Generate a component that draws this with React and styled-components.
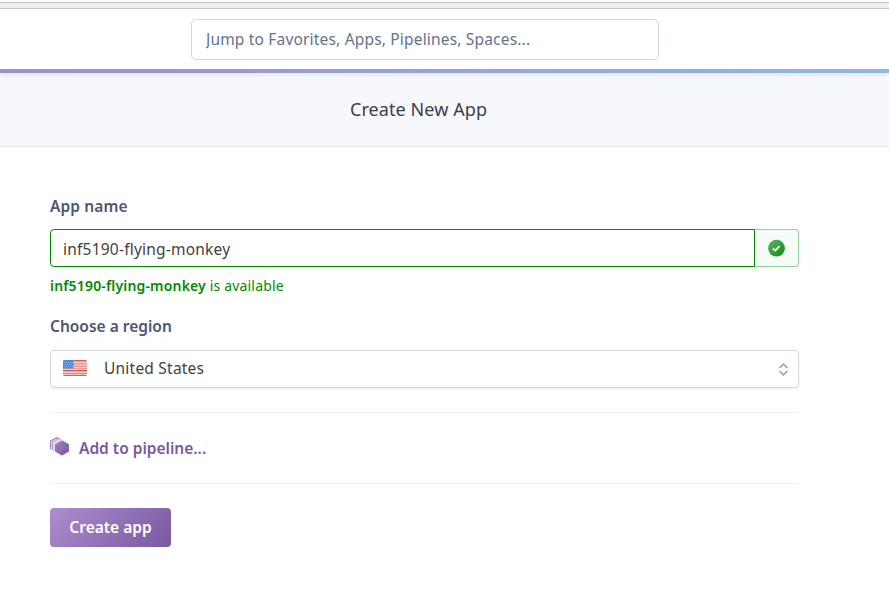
import React from 'react';
import styled, { createGlobalStyle } from 'styled-components';

const Global = createGlobalStyle`
  * { box-sizing: border-box; }
  body {
    margin: 0;
    background: #fff;
    color: #3f3f44;
    font-family: "Noto Sans", "Open Sans", sans-serif;
    font-size: 16px;
    overflow: hidden;
  }
`;

const Page = styled.div`
  display: flex;
  flex-direction: column;
  height: 609px;
`;

const BrowserEdge = styled.div`
  height: 7px;
  margin-top: 2px;
  background: #f0efee;
  border-top: 1px solid #c5c3c0;
  border-bottom: 1px solid #c5c3c0;
`;

const Header = styled.header`
  height: 60px;
  display: flex;
  padding: 10px 0 0 191px;
`;

const Search = styled.input`
  width: 468px;
  height: 41px;
  padding: 0 14px 1px;
  border: 1px solid #cfd7e6;
  border-radius: 5px;
  outline: none;
  background: #fff;
  font: 400 15.5px "Noto Sans", sans-serif;
  letter-spacing: 0.18px;
  &::placeholder { color: #62738d; opacity: 1; }
`;

const GradientBar = styled.div`
  height: 4px;
  background: linear-gradient(to right, #9e8fcb, #8fb8e0);
  box-shadow: 0 2px 4px rgba(0, 0, 0, 0.09);
  position: relative;
`;

const TitleBar = styled.div`
  height: 74px;
  padding: 0 0 2px 350px;
  display: flex;
  align-items: center;
  background: #f7f8fc;
  border-bottom: 1px solid #e3e8f3;
`;

const Title = styled.h1`
  margin: 0;
  font-size: 18px;
  font-weight: 400;
  line-height: 26px;
  letter-spacing: 0.08px;
  color: #3b3e4c;
`;

const Form = styled.form`
  width: 749px;
  margin-left: 50px;
  padding-top: 47px;
  display: flex;
  flex-direction: column;
`;

const Label = styled.label`
  height: 24px;
  line-height: 24px;
  margin-bottom: ${(p) => p.$gap}px;
  font-size: 15.5px;
  font-weight: 600;
  color: #4c586f;
  letter-spacing: ${(p) => p.$tracking || 0}px;
`;

const NameRow = styled.div`
  display: flex;
  height: 38px;
`;

const NameInput = styled.input`
  width: 705px;
  padding: 1px 12px 0;
  border: 1px solid #008a00;
  border-radius: 4px 0 0 4px;
  outline: none;
  color: #3f3f44;
  font: 400 15.5px "Noto Sans", sans-serif;
  letter-spacing: 0.22px;
  font-variant-ligatures: none;
`;

const Status = styled.div`
  flex: 1;
  display: flex;
  align-items: center;
  justify-content: center;
  border: 1px solid #8fd19b;
  border-left: 0;
  border-radius: 0 4px 4px 0;
  background: #f7fcf9;
`;

const Hint = styled.p`
  margin: 9px 0 18px;
  height: 20px;
  line-height: 20px;
  font-size: 14px;
  letter-spacing: 0.17px;
  color: #008a00;
  white-space: nowrap;
`;

const Strong = styled.strong`
  font-weight: 600;
`;

const Select = styled.div`
  height: 38px;
  padding: 0 9px 0 12px;
  display: flex;
  align-items: center;
  border: 1px solid #cfd7e6;
  border-radius: 4px;
  box-shadow: 0 2px 2px rgba(60, 80, 130, 0.05);
`;

const Region = styled.span`
  flex: 1;
  margin: -2px 0 0 17px;
  font-size: 15.5px;
  line-height: 24px;
  letter-spacing: 0.22px;
`;

const Rule = styled.hr`
  width: 100%;
  height: 1px;
  margin: ${(p) => p.$top}px 0 0;
  border: 0;
  background: #edeff4;
`;

const Pipeline = styled.a`
  height: 24px;
  margin-top: 23px;
  display: flex;
  align-items: center;
  gap: 9px;
  color: #79589f;
  font-size: 15.5px;
  font-weight: 600;
`;

const CreateButton = styled.button`
  width: 121px;
  height: 39px;
  margin-top: 24px;
  padding: 0 0 1px;
  border: 0;
  border-radius: 4px;
  color: #fff;
  background: linear-gradient(135deg, #ad8ecf, #79589f);
  font: 600 15.5px "Noto Sans", sans-serif;
`;

const PipelineSvg = styled.svg`
  margin-top: -4px;
`;

const FlagSvg = styled.svg`
  margin-top: -3px;
`;

const CheckIcon = () => (
  <svg width="18" height="18" viewBox="0 0 18 18">
    <defs>
      <linearGradient id="check" x1="0" y1="0" x2="1" y2="1">
        <stop offset="0" stopColor="#5cb768" />
        <stop offset="1" stopColor="#098c10" />
      </linearGradient>
    </defs>
    <circle cx="8.5" cy="9.2" r="8.4" fill="url(#check)" />
    <path d="M5 9.5l2.3 2.1 4.2-4.4" fill="none" stroke="#fff" strokeWidth="1.8" />
  </svg>
);

const stripes = [0, 1, 2, 3, 4, 5];

const Flag = () => (
  <FlagSvg width="24" height="16" viewBox="0 0 24 16">
    <defs>
      <clipPath id="flagShape"><rect width="24" height="16" rx="2" /></clipPath>
    </defs>
    <g clipPath="url(#flagShape)">
      <rect width="24" height="16" fill="#eb9d97" />
      <rect width="24" height="1" fill="#d95e53" />
      {stripes.map((i) => (
        <rect key={i} y={2 + i * 2.5} width="24" height="1" fill={i > 2 ? '#fff5f3' : '#f6cfcc'} />
      ))}
      <rect y="10" width="24" height="1" fill="#da5e53" />
      <rect y="12.8" width="24" height="1" fill="#e27368" />
      <rect y="15" width="24" height="1" fill="#d75a50" />
      <rect width="10.5" height="8.5" fill="#488fe2" />
      <path d="M1 2.5h9M2 4.5h8M1 6.5h9" stroke="#85b9f2" strokeWidth="1" strokeDasharray="1 1" />
    </g>
  </FlagSvg>
);

const PipelineIcon = () => (
  <PipelineSvg width="20" height="19" viewBox="0 0 20 19">
    <defs>
      <linearGradient id="hex" x1="0" y1="0" x2="1" y2="1">
        <stop offset="0" stopColor="#a283c4" />
        <stop offset="1" stopColor="#79589f" />
      </linearGradient>
    </defs>
    <path d="M12 3.2l6.2 3.5q.8.4.8 1.2v5.9q0 .8-.8 1.2L12.7 18.2q-.7.4-1.4 0l-5.5-3.2q-.8-.4-.8-1.2V7.9q0-.8.8-1.2z" fill="url(#hex)" />
    <path d="M.6 12.2V4L7.2.6l1.6.8" fill="none" stroke="#a283c4" strokeWidth="1.3" />
    <path d="M2.3 13.2V5.1L9 1.6l1.6.8" fill="none" stroke="#b297d0" strokeWidth="1.1" />
    <path d="M3.9 14.2V6.1l6.6-3.5 1.6.8" fill="none" stroke="#c4b0db" strokeWidth="1" />
  </PipelineSvg>
);

const Chevrons = () => (
  <svg width="11" height="13" viewBox="0 0 11 13">
    <path d="M1.5 5L5.5 1.2l4 3.8M1.5 8L5.5 11.8l4-3.8" fill="none" stroke="#97a3b6" strokeWidth="1.7" />
  </svg>
);

export default function App() {
  return (
    <>
      <Global />
      <Page>
        <BrowserEdge />
        <Header>
          <Search placeholder="Jump to Favorites, Apps, Pipelines, Spaces..." />
        </Header>
        <GradientBar />
        <TitleBar>
          <Title>Create New App</Title>
        </TitleBar>
        <Form onSubmit={(e) => e.preventDefault()}>
          <Label $gap={11} $tracking={0.12}>App name</Label>
          <NameRow>
            <NameInput defaultValue="inf5190-flying-monkey" spellCheck={false} />
            <Status><CheckIcon /></Status>
          </NameRow>
          <Hint><Strong>inf5190-flying-monkey</Strong> is available</Hint>
          <Label $gap={12}>Choose a region</Label>
          <Select>
            <Flag />
            <Region>United States</Region>
            <Chevrons />
          </Select>
          <Rule $top={24} />
          <Pipeline><PipelineIcon />Add to pipeline...</Pipeline>
          <Rule $top={23} />
          <CreateButton>Create app</CreateButton>
        </Form>
      </Page>
    </>
  );
}
